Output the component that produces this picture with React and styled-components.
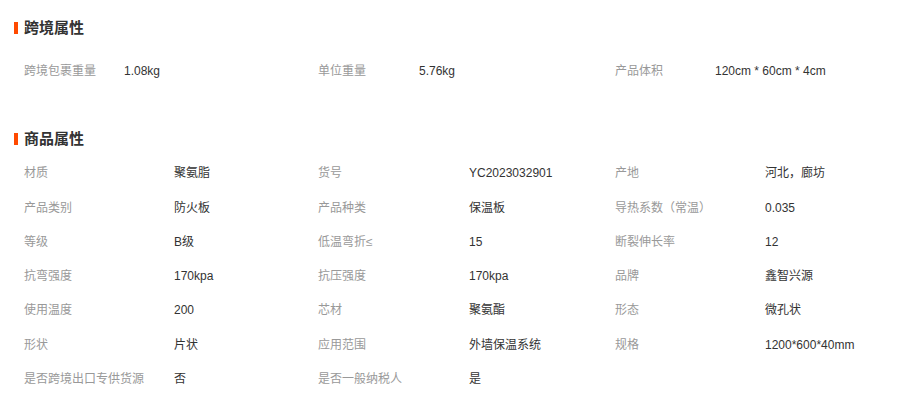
import React from "react";
import styled, { createGlobalStyle } from "styled-components";

const GlobalStyle = createGlobalStyle`
  body {
    margin: 0;
    background: #fff;
    font-family: "Liberation Sans", "Noto Sans CJK SC", sans-serif;
  }
`;

const StyledPage = styled.div`
  width: 901px;
  padding: 20px 0 0 14px;
  box-sizing: border-box;
`;
const StyledSection = styled.section`
  margin-top: ${props => props.top || 0}px;
`;
const StyledTitle = styled.h3`
  display: flex;
  align-items: center;
  gap: 6px;
  margin: 0;
  height: 15px;
  font-size: 15px;
  line-height: 15px;
  font-weight: bold;
  color: #333;
  &::before {
    content: "";
    display: block;
    width: 4px;
    height: 12px;
    background-color: #ff4a00;
  }
`;
const StyledGrid = styled.div`
  display: grid;
  grid-template-columns: ${props => props.cols};
  grid-auto-rows: 34.25px;
  margin-top: ${props => props.gap}px;
  padding-left: 10px;
`;
const StyledLabel = styled.div`
  display: flex;
  align-items: center;
  font-size: 12px;
  line-height: 14px;
  color: #999;
  white-space: nowrap;
`;
const StyledValue = styled.div`
  display: flex;
  align-items: center;
  font-size: 12px;
  line-height: 14px;
  color: #333;
  white-space: nowrap;
`;

const crossBorder = [
  ["跨境包裹重量", "1.08kg"],
  ["单位重量", "5.76kg"],
  ["产品体积", "120cm * 60cm * 4cm"]
];

const productAttrs = [
  ["材质", "聚氨脂"],
  ["货号", "YC2023032901"],
  ["产地", "河北，廊坊"],
  ["产品类别", "防火板"],
  ["产品种类", "保温板"],
  ["导热系数（常温）", "0.035"],
  ["等级", "B级"],
  ["低温弯折≤", "15"],
  ["断裂伸长率", "12"],
  ["抗弯强度", "170kpa"],
  ["抗压强度", "170kpa"],
  ["品牌", "鑫智兴源"],
  ["使用温度", "200"],
  ["芯材", "聚氨酯"],
  ["形态", "微孔状"],
  ["形状", "片状"],
  ["应用范围", "外墙保温系统"],
  ["规格", "1200*600*40mm"],
  ["是否跨境出口专供货源", "否"],
  ["是否一般纳税人", "是"]
];

const renderPairs = list =>
  list.map(([label, value]) => (
    <React.Fragment key={label}>
      <StyledLabel>{label}</StyledLabel>
      <StyledValue>{value}</StyledValue>
    </React.Fragment>
  ));

const App = () => {
  return (
    <StyledPage>
      <GlobalStyle />
      <StyledSection>
        <StyledTitle>跨境属性</StyledTitle>
        <StyledGrid cols="100px 194px 101px 196px 100px 1fr" gap={19}>
          {renderPairs(crossBorder)}
        </StyledGrid>
      </StyledSection>
      <StyledSection top={43}>
        <StyledTitle>商品属性</StyledTitle>
        <StyledGrid cols="150px 144px 151px 146px 150px 1fr" gap={10}>
          {renderPairs(productAttrs)}
        </StyledGrid>
      </StyledSection>
    </StyledPage>
  );
};

export default App;
